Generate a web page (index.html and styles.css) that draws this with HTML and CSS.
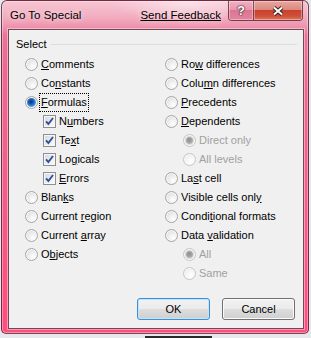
FILE: index.html
```html
<!DOCTYPE html>
<html lang="en">
<head>
    <meta charset="UTF-8">
    <title>Go To Special</title>
    <link rel="stylesheet" href="styles.css">
</head>
<body>
    <div class="window">
        <div class="titlebar">
            <span class="title">Go To Special</span>
            <span class="feedback">Send Feedback</span>
            <div class="caption">
                <span class="cbtn help">?</span>
                <span class="cbtn close">
                    <svg width="12" height="10" viewBox="0 0 12 10">
                        <path d="M2 1.5 L10 8.5 M10 1.5 L2 8.5" stroke="#3a2028" stroke-width="4" fill="none"/>
                        <path d="M2 1.5 L10 8.5 M10 1.5 L2 8.5" stroke="#ffffff" stroke-width="2" fill="none"/>
                    </svg>
                </span>
            </div>
        </div>

        <div class="client">
            <div class="groupHead">
                <span>Select</span>
                <i class="rule"></i>
            </div>

            <div class="options">
                <div class="col">
                    <div class="row"><span class="radio"></span><span class="lbl"><u>C</u>omments</span></div>
                    <div class="row"><span class="radio"></span><span class="lbl">Co<u>n</u>stants</span></div>
                    <div class="row"><span class="radio on"></span><span class="lbl focus"><u>F</u>ormulas</span></div>
                    <div class="row sub"><span class="check"><svg width="9" height="9" viewBox="0 0 9 9"><path d="M1 4.3 L3.4 7 L8 1" stroke="#32519c" stroke-width="1.9" fill="none"/></svg></span><span class="lbl">N<u>u</u>mbers</span></div>
                    <div class="row sub"><span class="check"><svg width="9" height="9" viewBox="0 0 9 9"><path d="M1 4.3 L3.4 7 L8 1" stroke="#32519c" stroke-width="1.9" fill="none"/></svg></span><span class="lbl">Te<u>x</u>t</span></div>
                    <div class="row sub"><span class="check"><svg width="9" height="9" viewBox="0 0 9 9"><path d="M1 4.3 L3.4 7 L8 1" stroke="#32519c" stroke-width="1.9" fill="none"/></svg></span><span class="lbl">Lo<u>g</u>icals</span></div>
                    <div class="row sub"><span class="check"><svg width="9" height="9" viewBox="0 0 9 9"><path d="M1 4.3 L3.4 7 L8 1" stroke="#32519c" stroke-width="1.9" fill="none"/></svg></span><span class="lbl"><u>E</u>rrors</span></div>
                    <div class="row"><span class="radio"></span><span class="lbl">Blan<u>k</u>s</span></div>
                    <div class="row"><span class="radio"></span><span class="lbl">Current <u>r</u>egion</span></div>
                    <div class="row"><span class="radio"></span><span class="lbl">Current <u>a</u>rray</span></div>
                    <div class="row"><span class="radio"></span><span class="lbl">O<u>b</u>jects</span></div>
                </div>
                <div class="col">
                    <div class="row"><span class="radio"></span><span class="lbl">Ro<u>w</u> differences</span></div>
                    <div class="row"><span class="radio"></span><span class="lbl">Colu<u>m</u>n differences</span></div>
                    <div class="row"><span class="radio"></span><span class="lbl"><u>P</u>recedents</span></div>
                    <div class="row"><span class="radio"></span><span class="lbl"><u>D</u>ependents</span></div>
                    <div class="row sub dis"><span class="radio on"></span><span class="lbl">Direct only</span></div>
                    <div class="row sub dis"><span class="radio"></span><span class="lbl">All levels</span></div>
                    <div class="row"><span class="radio"></span><span class="lbl">La<u>s</u>t cell</span></div>
                    <div class="row"><span class="radio"></span><span class="lbl">Visible cells onl<u>y</u></span></div>
                    <div class="row"><span class="radio"></span><span class="lbl">Condi<u>t</u>ional formats</span></div>
                    <div class="row"><span class="radio"></span><span class="lbl">Data <u>v</u>alidation</span></div>
                    <div class="row sub dis"><span class="radio on"></span><span class="lbl">All</span></div>
                    <div class="row sub dis"><span class="radio"></span><span class="lbl">Same</span></div>
                </div>
            </div>

            <div class="actions">
                <button type="button" class="btn default">OK</button>
                <button type="button" class="btn">Cancel</button>
            </div>
        </div>
    </div>
    <div class="taskBit"></div>
</body>
</html>
```

FILE: styles.css
```css
* {
    box-sizing: border-box;
}
body {
    margin: 0;
    width: 311px;
    height: 338px;
    overflow: hidden;
    background-color: #e6e8eb;
    font-family: "Liberation Sans", Arial, sans-serif;
    font-size: 11px;
    color: #000;
}
.window {
    margin-left: 1px;
    width: 308px;
    height: 334px;
    border: 1px solid rgba(70, 30, 45, 0.75);
    border-radius: 6px 6px 5px 5px;
    background:
        radial-gradient(ellipse 110px 24px at 185px 3px, rgba(255, 255, 255, 0.5), rgba(255, 255, 255, 0) 70%),
        linear-gradient(180deg, #f6c6d3 0px, #f2adc0 16px, #ee8fab 27px, #ec7297 34px, #ee6790 70px, #f55a88 200px, #ff4d7e 100%);
    box-shadow: inset 0 0 0 1px rgba(255, 255, 255, 0.35);
    display: flex;
    flex-direction: column;
}
.titlebar {
    display: flex;
    align-items: flex-start;
    height: 28px;
    padding-left: 8px;
}
.title,
.feedback {
    margin-top: 7px;
    line-height: 14px;
    font-size: 11.5px;
    text-shadow: 0 0 6px rgba(255, 255, 255, 0.9);
}
.feedback {
    margin-left: auto;
    margin-right: 7px;
    text-decoration: underline;
}
.caption {
    display: flex;
    margin-right: 5px;
    border: 1px solid rgba(60, 20, 30, 0.7);
    border-top: none;
    border-radius: 0 0 4px 4px;
    overflow: hidden;
}
.cbtn {
    height: 19px;
    display: flex;
    align-items: center;
    justify-content: center;
    box-shadow: inset 0 0 0 1px rgba(255, 255, 255, 0.35);
}
.help {
    width: 25px;
    border-right: 1px solid rgba(60, 20, 30, 0.6);
    background: linear-gradient(180deg, #f1b2c3 0, #e995ad 45%, #dd7592 50%, #e3849f 100%);
    color: #fff;
    font-weight: bold;
    font-size: 13px;
    text-shadow: 0 0 1px #3a2028, 0 0 1px #3a2028, 0 0 2px #3a2028;
}
.close {
    width: 48px;
    background: linear-gradient(180deg, #e7a89e 0, #dc8a7d 45%, #c8422e 50%, #d0503a 80%, #dc7a5e 100%);
}
.client {
    flex: 1;
    margin: 0 4px 4px 6px;
    border: 1px solid #6e4a57;
    background-color: #f0f0f0;
    box-shadow: 0 0 0 1px rgba(255, 225, 235, 0.5);
    display: flex;
    flex-direction: column;
}
.groupHead {
    display: flex;
    align-items: center;
    padding: 7px 6px 0 7px;
    line-height: 14px;
}
.rule {
    flex: 1;
    height: 1px;
    margin-left: 4px;
    background-color: #d5dfe5;
}
.options {
    display: grid;
    grid-template-columns: 140px 1fr;
    margin-top: 4px;
    padding-left: 16px;
}
.row {
    display: flex;
    align-items: center;
    height: 19px;
}
.row.sub {
    padding-left: 18px;
}
.lbl {
    margin-left: 2px;
    padding: 1px 1px;
    line-height: 15px;
    white-space: nowrap;
}
.lbl.focus {
    outline: 1px dotted #000;
}
.dis .lbl {
    color: #a0a0a0;
}
.radio {
    flex: none;
    width: 13px;
    height: 13px;
    border-radius: 50%;
    border: 1px solid #a6a6a6;
    background: radial-gradient(circle at 65% 70%, #ffffff 0, #eeeeee 40%, #d4d5d7 100%);
    box-shadow: inset 0 0 0 1px #f8f8f8;
    display: flex;
    align-items: center;
    justify-content: center;
}
.radio.on::after {
    content: "";
    width: 9px;
    height: 9px;
    border-radius: 50%;
    background: radial-gradient(circle at 45% 42%, #0e2f78 0, #1d5cb6 35%, #4aa6ec 70%, #a6ddfb 100%);
}
.dis .radio {
    border-color: #c6c6c6;
    background: radial-gradient(circle at 65% 70%, #ffffff 0, #f4f4f4 50%, #e2e2e2 100%);
}
.dis .radio.on::after {
    width: 7px;
    height: 7px;
    background: radial-gradient(circle at 45% 40%, #8e8e8e 0, #a6a6a6 50%, #c4c4c4 100%);
    box-shadow: 0 0 0 1px #dadada;
}
.check {
    flex: none;
    width: 13px;
    height: 13px;
    border: 1px solid #8e8f8f;
    background: linear-gradient(135deg, #d2d5da 0, #f3f3f3 70%, #fbfbfb 100%);
    box-shadow: inset 0 0 0 1px #f7f7f7;
    display: flex;
    align-items: center;
    justify-content: center;
}
.actions {
    display: flex;
    justify-content: flex-end;
    gap: 12px;
    margin-top: 15px;
    padding-right: 8px;
}
.btn {
    width: 73px;
    height: 22px;
    padding: 0;
    border: 1px solid #707070;
    border-radius: 3px;
    background: linear-gradient(180deg, #f2f2f2 0, #ebebeb 48%, #dddddd 52%, #cfcfcf 100%);
    box-shadow: inset 0 0 0 1px #fbfbfb;
    font-family: "Liberation Sans", Arial, sans-serif;
    font-size: 11px;
    color: #000;
}
.btn.default {
    border-color: #3d8ed8;
    box-shadow: inset 0 0 0 1px #bfe6fb;
}
.taskBit {
    margin: 2px 0 0 145px;
    width: 67px;
    height: 4px;
    background-color: #2a2a2a;
}
```
